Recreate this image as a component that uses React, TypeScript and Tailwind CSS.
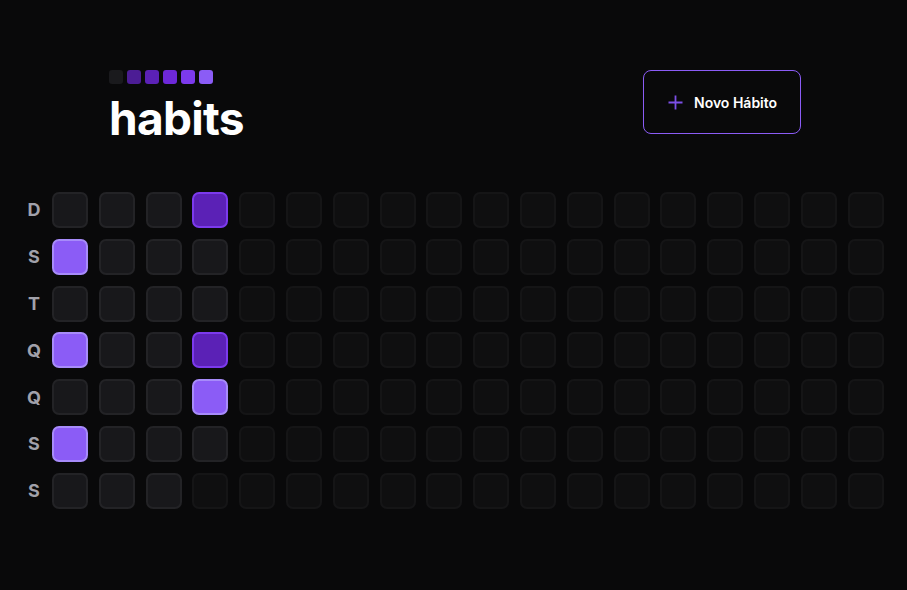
const weekDays = ["D", "S", "T", "Q", "Q", "S", "S"];

// nível de cada dia passado (0 = vazio), na ordem das colunas
const levels: Record<number, number> = {
  1: 5,
  3: 5,
  5: 5,
  21: 2,
  24: 2,
  25: 5,
};

const PAST_DAYS = 27;
const TOTAL = 18 * 7;

function levelClass(level: number) {
  if (level === 5) return "bg-[#8b5cf6] border-[#a78bfa]";
  if (level === 4) return "bg-[#7c3aed] border-[#8b5cf6]";
  if (level === 3) return "bg-[#6d28d9] border-[#8b5cf6]";
  if (level === 2) return "bg-[#5b21b6] border-[#7c3aed]";
  if (level === 1) return "bg-[#4c1d95] border-[#6d28d9]";
  return "bg-[#18181b] border-[#232326]";
}

function Logo() {
  const colors = [
    "bg-[#1a1a1d]",
    "bg-[#4c1d95]",
    "bg-[#5b21b6]",
    "bg-[#6d28d9]",
    "bg-[#7c3aed]",
    "bg-[#8b5cf6]",
  ];
  return (
    <div className="flex flex-col">
      <div className="flex gap-[3.6px]">
        {colors.map((c, i) => (
          <div key={i} className={`h-[14.4px] w-[14.4px] rounded-[3px] ${c}`} />
        ))}
      </div>
      <span className="mt-[11px] text-[46px] leading-none font-bold tracking-[-0.015em] text-white">
        habits
      </span>
    </div>
  );
}

export default function App() {
  const days = Array.from({ length: TOTAL }, (_, i) => i);

  return (
    <div
      className="min-h-[590px] w-full bg-[#09090a] pt-[70px] px-4"
      style={{ fontFamily: "Inter, 'Noto Sans', sans-serif" }}
    >
      {/* Header */}
      <header className="ml-[93px] flex w-[692px] items-start justify-between">
        <Logo />
        <button className="flex h-[64px] w-[158px] items-center gap-[10px] rounded-lg border border-[#8b5cf6] pl-[23px] text-[14px] font-semibold text-white">
          <svg width="17" height="17" viewBox="0 0 17 17" fill="none">
            <path d="M1.5 8.5h14M8.5 1.5v14" stroke="#7c4fe6" strokeWidth="1.8" />
          </svg>
          Novo Hábito
        </button>
      </header>

      {/* Tabela */}
      <div className="mt-[50.6px] flex">
        <div className="grid grid-rows-7 gap-[10.8px]">
          {weekDays.map((d, i) => (
            <div
              key={i}
              className="flex h-[36px] w-[36px] items-center justify-center text-[18px] font-bold text-[#a1a1aa]"
            >
              {d}
            </div>
          ))}
        </div>
        <div className="grid grid-flow-col grid-rows-7 gap-[10.8px]">
          {days.map((i) =>
            i < PAST_DAYS ? (
              <div
                key={i}
                className={`h-[36px] w-[36px] rounded-[7px] border-2 ${levelClass(levels[i] ?? 0)}`}
              />
            ) : (
              <div
                key={i}
                className="h-[36px] w-[36px] rounded-[7px] border-2 border-[#27272a] bg-[#18181b] opacity-40"
              />
            ),
          )}
        </div>
      </div>
    </div>
  );
}
